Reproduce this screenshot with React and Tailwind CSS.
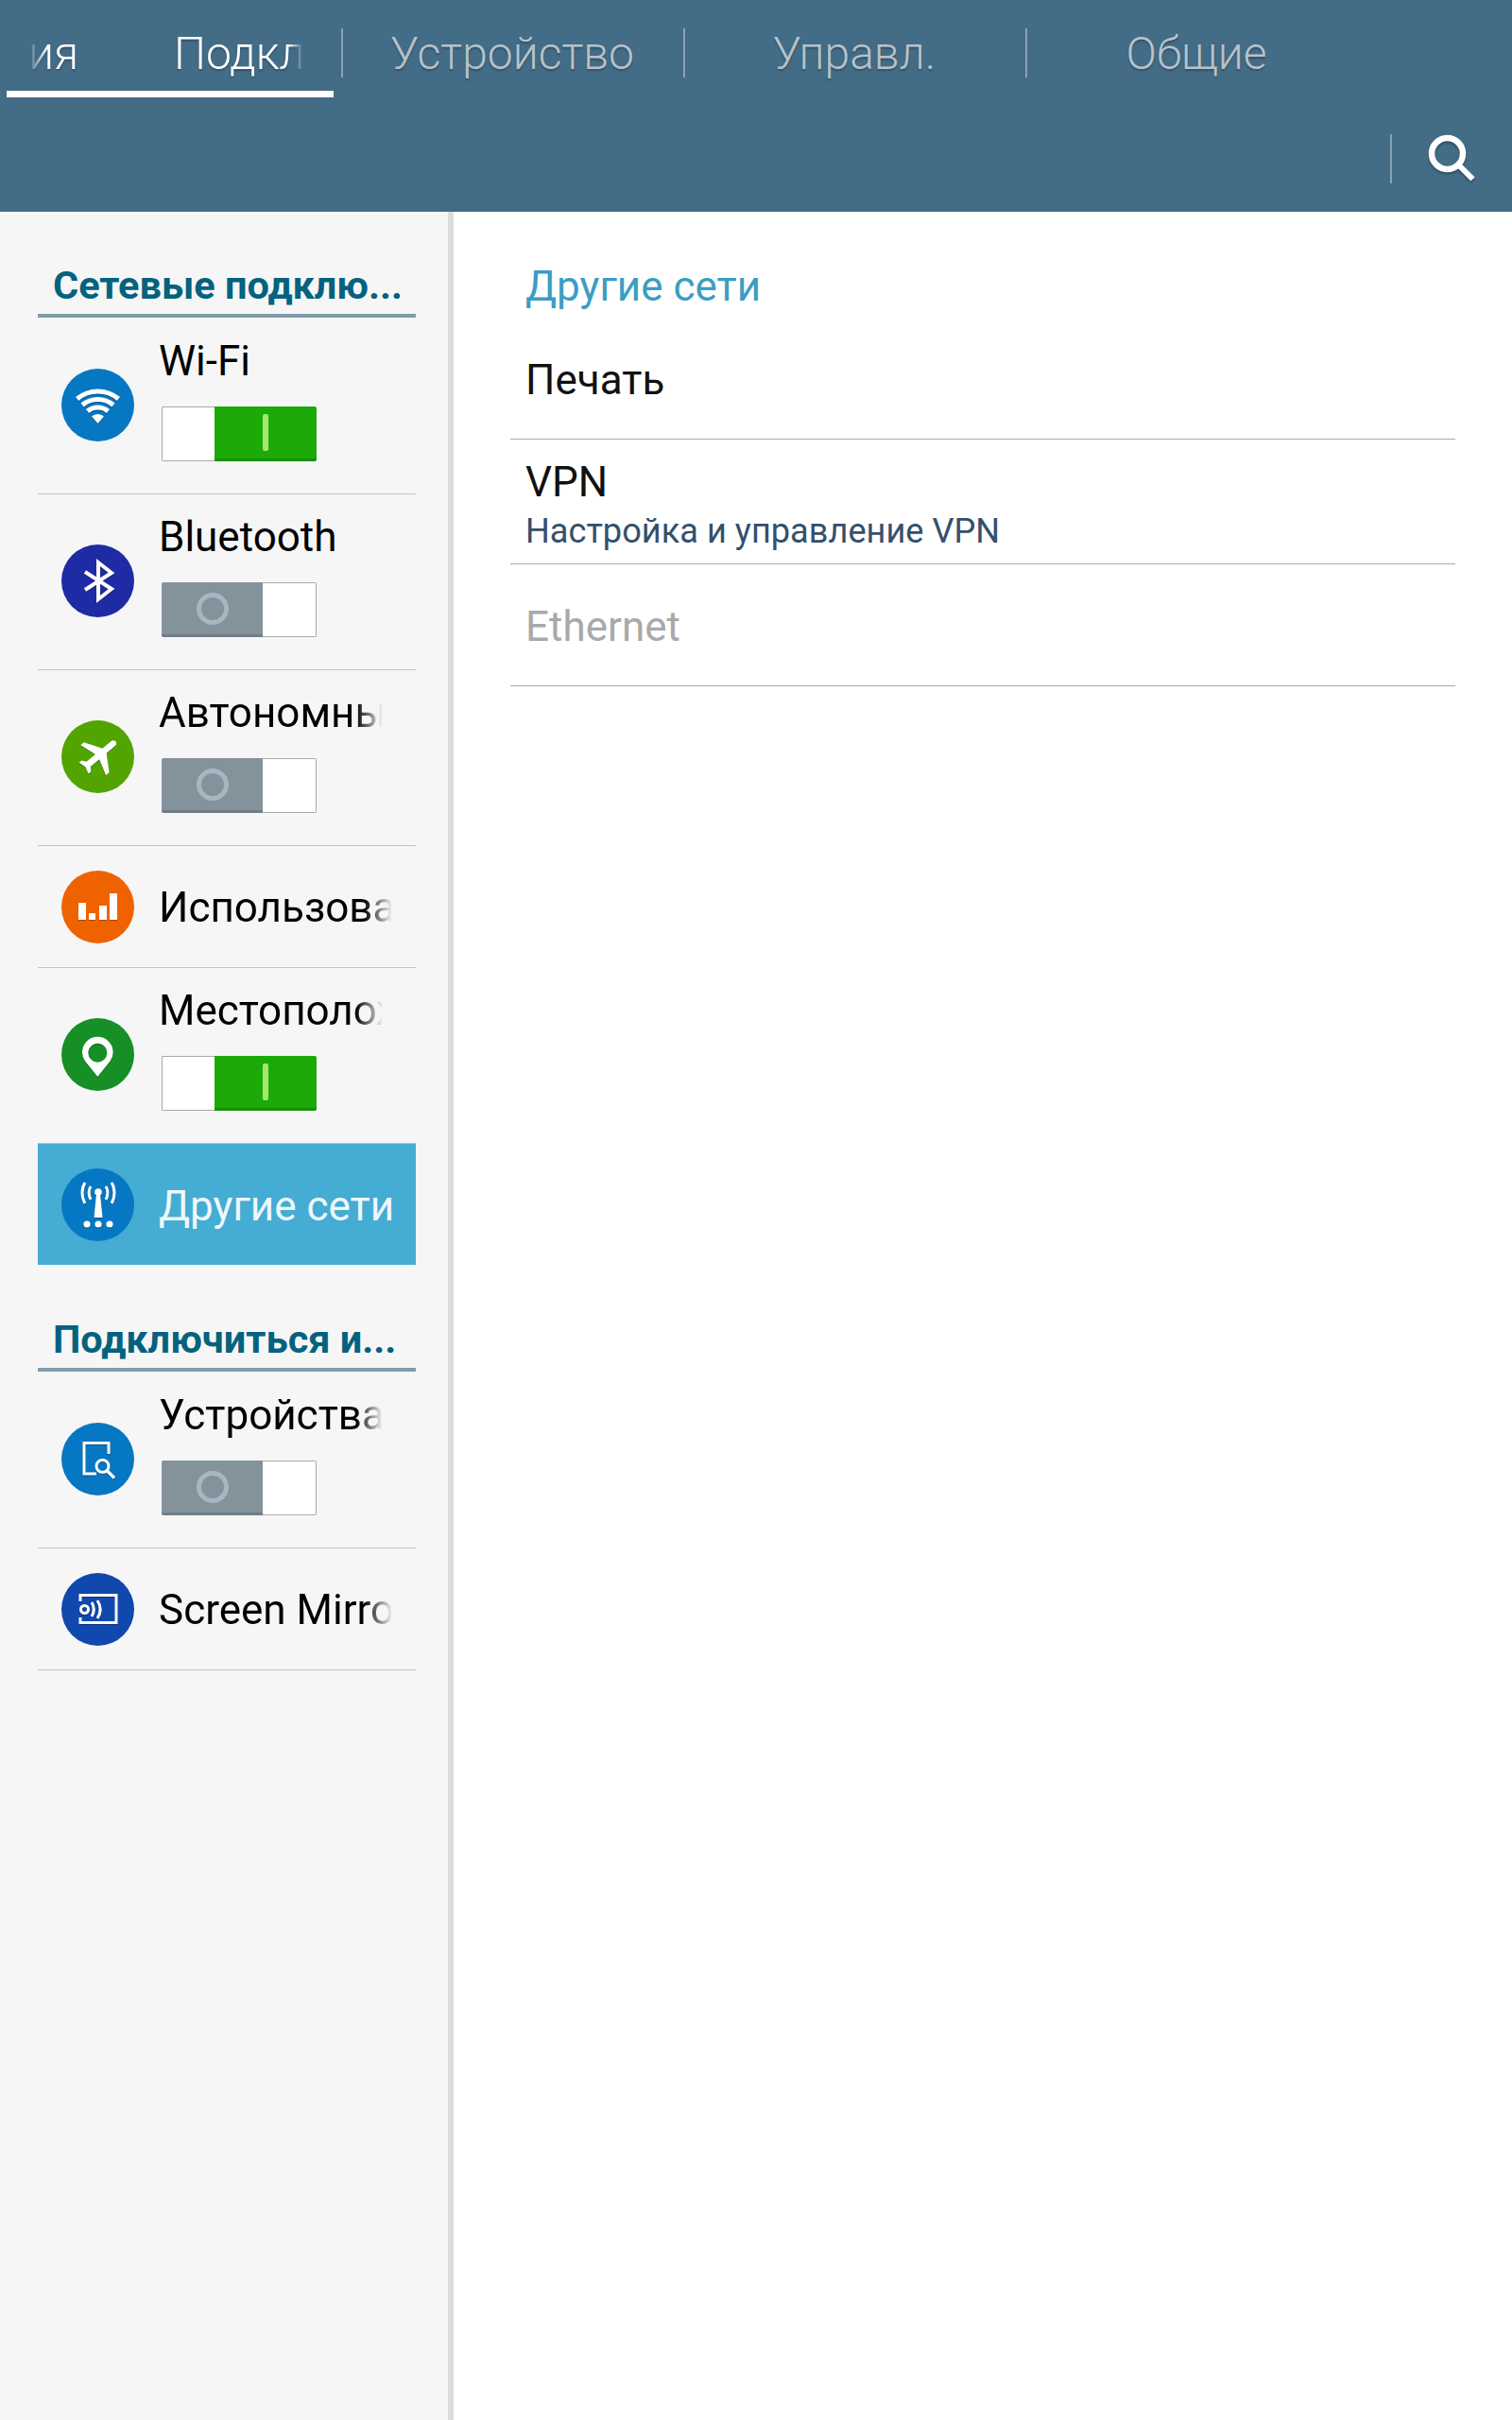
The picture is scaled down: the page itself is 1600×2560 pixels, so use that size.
import React from 'react';

const FADE = 'overflow-hidden whitespace-nowrap [mask-image:linear-gradient(to_right,#000_88%,transparent)]';

const iconClass = 'w-[77px] h-[77px] drop-shadow-[0_1px_0_rgba(0,0,0,0.3)]';

const WifiIcon = () => (
  <svg viewBox="0 0 77 77" className={iconClass} fill="none" stroke="#fff" strokeWidth="5">
    <path d="M16.6 32A34 34 0 0 1 60.4 32" />
    <path d="M22.1 38.5A25.5 25.5 0 0 1 54.9 38.5" />
    <path d="M27.6 45A17 17 0 0 1 49.4 45" />
    <path d="M38.5 58L32 50.5A9.5 9.5 0 0 1 45 50.5Z" fill="#fff" stroke="none" />
  </svg>
);

const BluetoothIcon = () => (
  <svg viewBox="0 0 77 77" className={iconClass} fill="none" stroke="#fff" strokeWidth="4">
    <path d="M25 29L53 47L39 58V19L53 30L25 48" />
  </svg>
);

const PlaneIcon = () => (
  <svg viewBox="0 0 77 77" className={iconClass}>
    <g transform="translate(40.5 36.5) rotate(50) scale(2.2) translate(-11.5 -12)">
      <path fill="#fff" d="M21 16v-2l-8-5V3.5c0-.83-.67-1.5-1.5-1.5S10 2.67 10 3.5V9l-8 5v2l8-2.5V19l-2 1.5V22l3.5-1 3.5 1v-1.5L13 19v-5.5l8 2.5z" />
    </g>
  </svg>
);

const UsageIcon = () => (
  <svg viewBox="0 0 77 77" className={iconClass} fill="#fff">
    <rect x="18" y="34" width="8" height="18" />
    <rect x="29" y="45" width="7" height="7" />
    <rect x="40" y="37" width="8" height="15" />
    <rect x="51" y="24" width="8" height="28" />
  </svg>
);

const PinIcon = () => (
  <svg viewBox="0 0 77 77" className={iconClass}>
    <path
      fill="#fff"
      fillRule="evenodd"
      d="M38.3 62L25 45.5A16.3 16.3 0 1 1 51.6 45.5ZM38.3 26.7A10 10 0 1 0 38.3 46.7A10 10 0 1 0 38.3 26.7Z"
    />
  </svg>
);

const AntennaIcon = () => (
  <svg viewBox="0 0 77 77" className={iconClass} fill="none" stroke="#fff" strokeWidth="3">
    <circle cx="39" cy="25" r="3.8" fill="#fff" stroke="none" />
    <path d="M37 27H41L43.5 52H34.5Z" fill="#fff" stroke="none" />
    <path d="M31 19C28.5 23 28.5 29 31 33" />
    <path d="M25 15C21 21 21 31 25 37" />
    <path d="M47 19C49.5 23 49.5 29 47 33" />
    <path d="M53 15C57 21 57 31 53 37" />
    <circle cx="27" cy="59" r="3.6" fill="#fff" stroke="none" />
    <circle cx="39" cy="59" r="3.6" fill="#fff" stroke="none" />
    <circle cx="51" cy="59" r="3.6" fill="#fff" stroke="none" />
  </svg>
);

const DevicesIcon = () => (
  <svg viewBox="0 0 77 77" className={iconClass} fill="none" stroke="#fff" strokeWidth="3">
    <path d="M50 33V21.5H24V54H37" />
    <circle cx="43.5" cy="46" r="6.5" />
    <path d="M48.5 51L56 58.5" strokeWidth="3.4" />
  </svg>
);

const MirrorIcon = () => (
  <svg viewBox="0 0 77 77" className={iconClass} fill="none" stroke="#fff" strokeWidth="3">
    <path d="M20 30V23.5H58V52.5H20V47" />
    <circle cx="24.5" cy="38.5" r="4" />
    <path d="M32 31C35 36 35 41 32 46" />
    <path d="M38 29C42 35 42 42 38 48" />
  </svg>
);

const SearchIcon = () => (
  <svg viewBox="0 0 52 52" className="w-[52px] h-[52px] drop-shadow-[0_2px_1px_rgba(0,0,0,0.3)]" fill="none" stroke="#fff">
    <circle cx="20.5" cy="20.5" r="16.5" strokeWidth="6.5" />
    <path d="M32 32L47.5 47.5" strokeWidth="6" />
  </svg>
);

const Toggle = ({ on }) => (
  on ? (
    <div className="flex w-[164px] h-[58px] mt-[18px]">
      <div className="w-[56px] bg-white border border-[#aaaaaa] border-r-0 rounded-l-[2px]" />
      <div className="w-[108px] bg-[#1caa08] border-b-[3px] border-[#15930a] rounded-r-[2px] flex items-center justify-center">
        <div className="w-[6px] h-[39px] rounded-[2px] bg-[#a8e56d]" />
      </div>
    </div>
  ) : (
    <div className="flex w-[164px] h-[58px] mt-[18px]">
      <div className="w-[107px] bg-[#84929c] border-b-[3px] border-[#707e88] rounded-l-[2px] flex items-center justify-center">
        <div className="w-[34px] h-[34px] rounded-full border-[5px] border-[#a6b7c2]" />
      </div>
      <div className="w-[57px] bg-white border border-[#aaaaaa] border-l-0 rounded-r-[2px]" />
    </div>
  )
);

const Circle = ({ color, children }) => (
  <div className={`shrink-0 w-[77px] h-[77px] rounded-full ${color}`}>{children}</div>
);

const SectionTitle = ({ title, height }) => (
  <div className={`${height} flex items-end border-b-4 border-[#819ba8]`}>
    <div className="pl-[16px] text-[41.5px] leading-[60px] font-bold text-[#04627f] whitespace-nowrap">{title}</div>
  </div>
);

const ToggleRow = ({ icon, color, label, fade, on, height = 'h-[186px]', border = true }) => (
  <div className={`${height} flex items-center pl-[25px] pb-[2px] ${border ? 'border-b border-[#c4c4c4]' : ''}`}>
    <Circle color={color}>{icon}</Circle>
    <div className="ml-[29px] self-start pt-[15px]">
      <div className={`-ml-[3px] w-[237px] text-[44px] leading-[60px] text-black ${fade ? FADE : 'whitespace-nowrap'}`}>{label}</div>
      <Toggle on={on} />
    </div>
  </div>
);

const PlainRow = ({ icon, color, label }) => (
  <div className="h-[129px] flex items-center pl-[25px] border-b border-[#c4c4c4]">
    <Circle color={color}>{icon}</Circle>
    <div className={`ml-[26px] pt-[2px] w-[247px] text-[44px] leading-[60px] text-black ${FADE}`}>{label}</div>
  </div>
);

const SettingsSidebar = () => (
  <div className="w-[480px] shrink-0 bg-[#f6f6f6] border-r-[6px] border-[#dddddd] pl-[40px] pr-[34px] box-border">
    <SectionTitle title="Сетевые подклю..." height="h-[112px]" />
    <div className="pt-px">
      <ToggleRow icon={<WifiIcon />} color="bg-[#0677c2]" label="Wi-Fi" on />
      <ToggleRow icon={<BluetoothIcon />} color="bg-[#1f2aa5]" label="Bluetooth" />
      <ToggleRow icon={<PlaneIcon />} color="bg-[#52a500]" label="Автономны" fade />
      <PlainRow icon={<UsageIcon />} color="bg-[#ef6200]" label="Использова" />
      <ToggleRow icon={<PinIcon />} color="bg-[#168f26]" label="Местополож" fade on height="h-[185px]" border={false} />
      <div className="h-[129px] flex items-center pl-[25px] bg-[#45acd3] border-t border-[#a9c3cf]">
        <Circle color="bg-[#0677c2]"><AntennaIcon /></Circle>
        <div className="ml-[26px] pt-[3px] text-[44px] leading-[60px] text-[#eef8fc] whitespace-nowrap">Другие сети</div>
      </div>
    </div>
    <SectionTitle title="Подключиться и..." height="h-[113px]" />
    <div className="pt-px">
      <ToggleRow icon={<DevicesIcon />} color="bg-[#0677c2]" label="Устройства" fade />
      <PlainRow icon={<MirrorIcon />} color="bg-[#1048ae]" label="Screen Mirro" />
    </div>
  </div>
);

const Divider = () => <div className="shrink-0 w-[2px] h-[52px] bg-[#8aa3b4]" />;

const Tab = ({ label }) => (
  <div className="w-[360px] h-[52px] pt-[2px] pr-[2px] flex items-center justify-center text-[48px] font-light text-[#b7c2c9] [text-shadow:0_2px_2px_rgba(0,0,0,0.25)]">
    {label}
  </div>
);

const Header = () => (
  <div className="h-[224px] shrink-0 bg-[#436c87]">
    <div className="h-[112px] flex items-start">
      <div className="ml-[7px] w-[346px] h-[103px] border-b-[7px] border-white pl-[23px] pt-[18px] flex items-center text-[48px] font-light text-white [text-shadow:0_2px_2px_rgba(0,0,0,0.25)]">
        <div className="w-[52px] whitespace-nowrap [mask-image:linear-gradient(to_right,transparent,#000_40%)]">ия</div>
        <div className={`ml-[102px] w-[137px] ${FADE}`}>Подкл</div>
      </div>
      <div className="ml-[8px] mt-[30px] flex items-center">
        <Divider />
        <Tab label="Устройство" />
        <Divider />
        <Tab label="Управл." />
        <Divider />
        <Tab label="Общие" />
      </div>
    </div>
    <div className="h-[112px] flex items-center justify-end pr-[37px]">
      <Divider />
      <div className="ml-[38px]"><SearchIcon /></div>
    </div>
  </div>
);

const OtherNetworks = () => (
  <div className="flex-1 bg-white px-[60px]">
    <div className="h-[112px] flex items-end pl-[16px] pb-[3px] text-[44px] leading-[60px] text-[#3b9dc2]">Другие сети</div>
    <div className="h-[129px] pt-[4px] pl-[16px] flex items-center border-b border-[#ababab] text-[44px] text-[#111111]">Печать</div>
    <div className="h-[132px] pl-[16px] pt-[15px] border-b border-[#ababab]">
      <div className="text-[44px] leading-[60px] text-[#111111]">VPN</div>
      <div className="text-[36.2px] leading-[44px] text-[#34506b]">Настройка и управление VPN</div>
    </div>
    <div className="h-[129px] pl-[16px] pt-[3px] flex items-center border-b border-[#ababab] text-[44px] text-[#a9a9a9]">Ethernet</div>
  </div>
);

export default function App() {
  return (
    <div className="w-[1600px] h-[2560px] flex flex-col font-['Roboto',sans-serif] overflow-hidden">
      <Header />
      <div className="flex-1 flex">
        <SettingsSidebar />
        <OtherNetworks />
      </div>
    </div>
  );
}
